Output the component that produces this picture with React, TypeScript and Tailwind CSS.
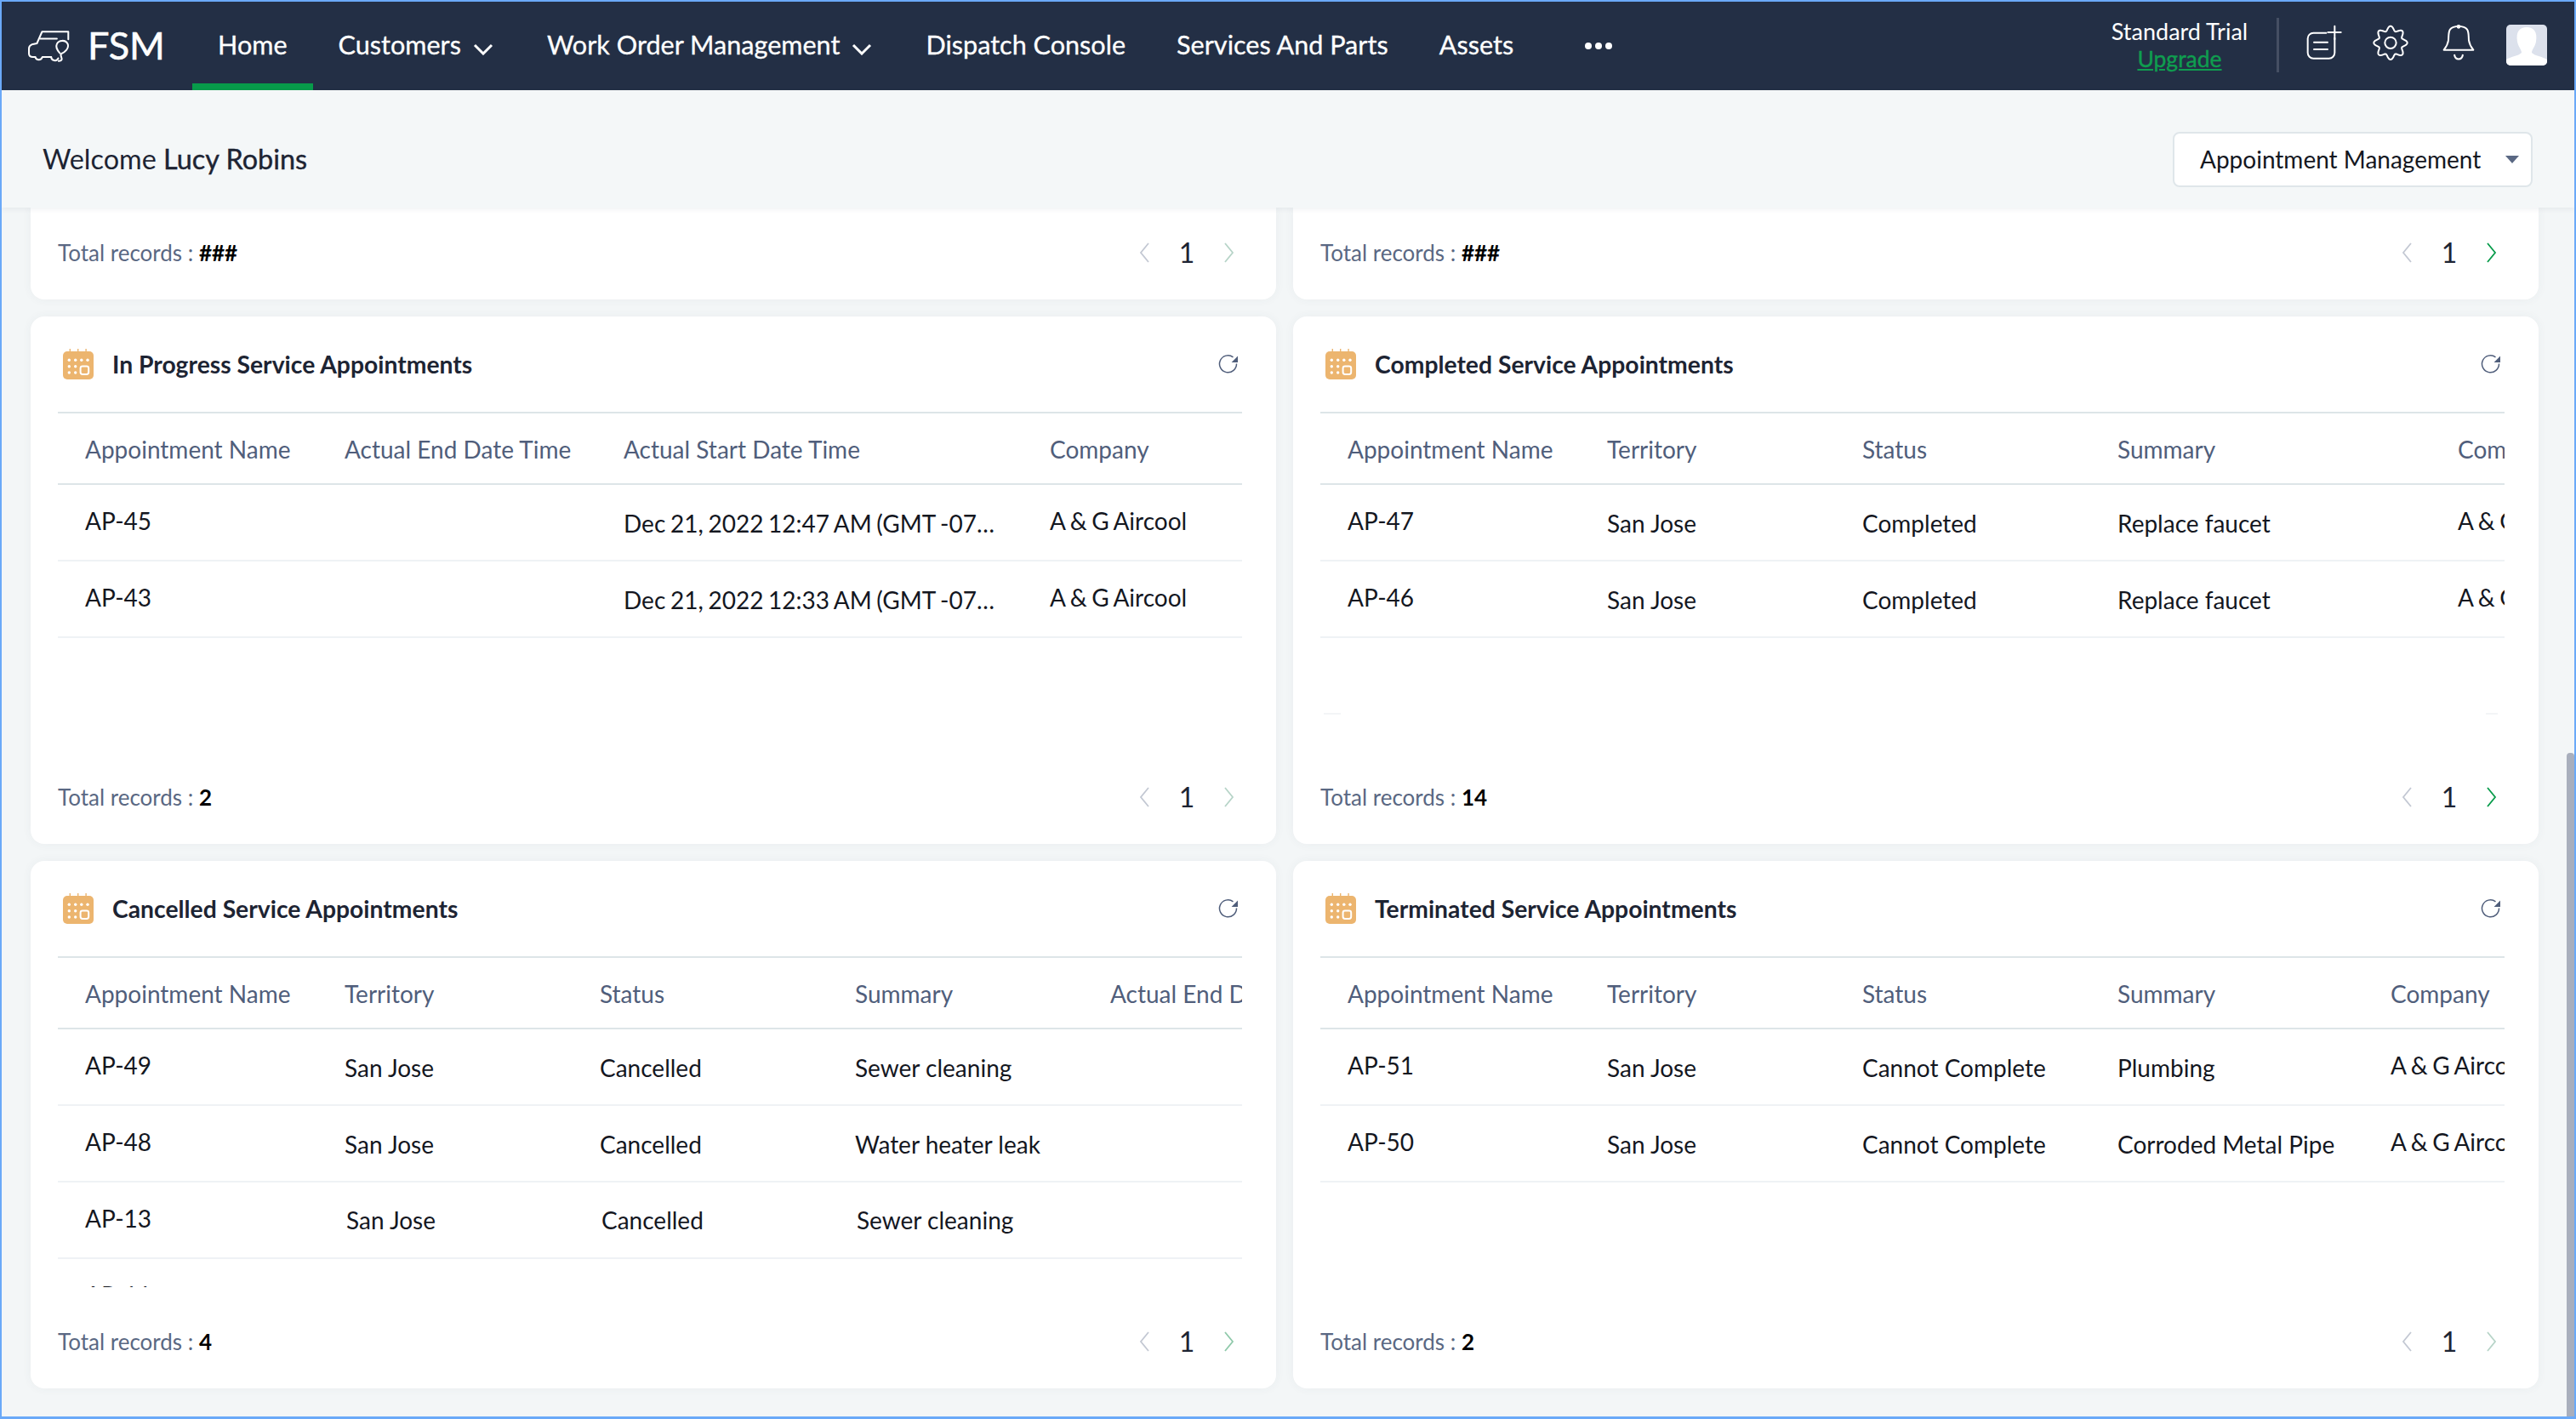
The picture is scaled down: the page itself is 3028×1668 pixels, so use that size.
import React from "react";

const gearPath = (() => {
  const pts: string[] = [];
  const cx = 360, cy = 97;
  for (let i = 0; i <= 160; i++) {
    const t = (i / 160) * Math.PI * 2;
    const r = 51 + 8 * Math.cos(8 * t);
    pts.push(`${i === 0 ? "M" : "L"}${(cx + r * Math.cos(t)).toFixed(1)} ${(cy + r * Math.sin(t)).toFixed(1)}`);
  }
  return pts.join(" ") + " Z";
})();

function Logo() {
  return (
    <svg width="57" height="44" viewBox="30 30 170 130" fill="none" stroke="#fff" strokeWidth="6" strokeLinejoin="round" strokeLinecap="round" className="shrink-0">
      <path d="M180 72 V45 H88 L70 86 L52 90 Q42 94 42 104 V122 Q42 134 56 134 H64" />
      <path d="M64 134 a13 13 0 0 0 25 0 H120" />
      <path d="M82 70 H140" />
      <path d="M120 134 a13 13 0 0 0 25 4" />
      <path d="M150 120 C136 104 136 96 140 88 C146 74 170 72 178 88 C184 104 166 118 156 122 C146 128 170 146 146 148" />
    </svg>
  );
}

function Calendar() {
  return (
    <svg width="36" height="36" viewBox="0 0 36 36" className="shrink-0">
      <rect x="0" y="3" width="36" height="33" rx="5" fill="#ecb56f" />
      <rect x="7.6" y="0" width="1.4" height="4" fill="#ecb56f" />
      <rect x="17" y="0" width="1.4" height="4" fill="#ecb56f" />
      <rect x="26.4" y="0" width="1.4" height="4" fill="#ecb56f" />
      {[7.3, 14.7, 21.8, 29].map((x) => <circle key={x} cx={x} cy="13.3" r="1.7" fill="#fff" />)}
      {[7.3, 14.7].map((x) => <circle key={x} cx={x} cy="20.7" r="1.7" fill="#fff" />)}
      {[7.3, 14.7].map((x) => <circle key={x} cx={x} cy="28" r="1.7" fill="#fff" />)}
      <rect x="20.6" y="20.4" width="9.6" height="9.6" rx="2.4" fill="none" stroke="#fff" strokeWidth="2" />
    </svg>
  );
}

function Refresh() {
  return (
    <svg width="24" height="24" viewBox="0 0 24 24" fill="none" className="shrink-0">
      <path d="M21.5 11.5 A10 10 0 1 1 17.5 3.8" stroke="#4f5d7a" strokeWidth="1.5" />
      <path d="M23 2.4 V10 H15.6 Z" fill="#4f5d7a" />
    </svg>
  );
}

function Chevron({ dir, color }: { dir: "l" | "r"; color: string }) {
  return (
    <svg width="14" height="26" viewBox="0 0 14 26" fill="none" stroke={color} strokeWidth="1.8">
      <path d={dir === "l" ? "M12 2 L3 13 L12 24" : "M2 2 L11 13 L2 24"} />
    </svg>
  );
}

function Pager({ next }: { next: string }) {
  return (
    <div className="flex items-center">
      <Chevron dir="l" color="#c3c8d3" />
      <span className="w-[86px] text-center text-[32px] text-[#1d2433]">1</span>
      <Chevron dir="r" color={next} />
    </div>
  );
}

function Footer({ total, next }: { total: string; next: string }) {
  return (
    <div className="mt-auto h-[110px] shrink-0 flex items-center justify-between pl-8 pr-[48px]">
      <div className="text-[26px] text-[#5a6883]">
        Total records : <span className="font-bold text-black">{total}</span>
      </div>
      <Pager next={next} />
    </div>
  );
}

type Cell = { t: string; up?: boolean; tight?: boolean };
type CardProps = {
  title: string;
  cols: string;
  heads: string[];
  rows: { cells: Cell[]; nudge?: boolean }[];
  total: string;
  next: string;
  ghostLine?: boolean;
};

function Card({ title, cols, heads, rows, total, next, ghostLine }: CardProps) {
  return (
    <section className="h-[620px] bg-white rounded-[16px] shadow-[0_0_12px_rgba(60,80,100,0.05)] flex flex-col">
      <header className="h-[112px] shrink-0 flex items-center pl-[38px] pr-[44px]">
        <Calendar />
        <h2 className="ml-[22px] text-[28.3px] leading-none font-bold text-[#1d2433]">{title}</h2>
        <div className="ml-auto"><Refresh /></div>
      </header>
      <div className="ml-8 mr-10 h-[389px] overflow-hidden">
        <div className={`grid ${cols} h-[86px] border-y-2 border-[#dde5e8] items-center text-[28px] text-[#505e7b] whitespace-nowrap`}>
          {heads.map((h) => <div key={h} className="pl-8 pt-[1px] overflow-hidden">{h}</div>)}
        </div>
        {rows.map((r, i) => (
          <div key={i} className={`grid ${cols} h-[90px] border-b-2 border-[#eff2f5] items-center text-[28px] text-[#14171f] whitespace-nowrap`}>
            {r.cells.map((c, j) => (
              <div key={j} className={`${c.up ? "pb-[5px]" : r.nudge ? "" : "pt-[1px]"} ${r.nudge && j > 0 ? "pl-[34px]" : "pl-8"} ${c.tight ? "[word-spacing:-1.5px]" : ""}`}>{c.t}</div>
            ))}
          </div>
        ))}
        {ghostLine && (
          <div className="mt-[88px] h-[2px] flex justify-between">
            <div className="w-5 ml-1 bg-[#f3f5f7]" />
            <div className="w-[14px] mr-[8px] bg-[#f3f5f7]" />
          </div>
        )}
      </div>
      <Footer total={total} next={next} />
    </section>
  );
}

const NavItem = ({ children, chevron, active }: { children: string; chevron?: boolean; active?: boolean }) => (
  <div className={`relative h-full flex items-center pl-[30px] ${chevron ? "pr-[33px]" : "pr-[30px]"} whitespace-nowrap`}>
    <span className="pb-[2px]">{children}</span>
    {chevron && (
      <svg width="24" height="14" viewBox="0 0 24 14" fill="none" stroke="#fff" strokeWidth="3" className="ml-[14px] mt-[7px]">
        <path d="M2 2 L12 12 L22 2" />
      </svg>
    )}
    {active && <div className="absolute left-0 right-0 bottom-0 h-2 bg-[#079b4a]" />}
  </div>
);

const up = (t: string): Cell => ({ t, up: true });
const co = (t: string): Cell => ({ t, up: true, tight: true });
const c = (t: string): Cell => ({ t });
const d = (t: string): Cell => ({ t, tight: true });
const D1 = "Dec 21, 2022 12:47 AM (GMT -07…";
const D2 = "Dec 21, 2022 12:33 AM (GMT -07…";

export default function App() {
  return (
    <div className="w-[3028px] h-[1668px] overflow-hidden flex flex-col border-x-2 border-t-2 border-b-[3px] border-[#6aa9f8] bg-[#f3f6f7] font-['Lato','Noto_Sans',sans-serif]">
      <nav className="h-[104px] shrink-0 bg-[#232f45] flex items-stretch text-white text-[30.6px] [-webkit-text-stroke:0.3px_white]">
        <div className="flex items-center w-[224px] shrink-0 pl-[28px]">
          <Logo />
          <span className="ml-[16px] text-[45px] leading-none pb-[2px] [-webkit-text-stroke:0.6px_white]">FSM</span>
        </div>
        <NavItem active>Home</NavItem>
        <NavItem chevron>Customers</NavItem>
        <NavItem chevron>Work Order Management</NavItem>
        <NavItem>Dispatch Console</NavItem>
        <NavItem>Services And Parts</NavItem>
        <NavItem>Assets</NavItem>
        <div className="flex items-center gap-[4px] pl-[54px]">
          <span className="w-[8px] h-[8px] rounded-full bg-white" />
          <span className="w-[8px] h-[8px] rounded-full bg-white" />
          <span className="w-[8px] h-[8px] rounded-full bg-white" />
        </div>
        <div className="ml-auto flex items-center pr-[32px]">
          <div className="w-[180px] flex flex-col items-center text-[27px] leading-[32px] mr-[24px] pb-[2px] [-webkit-text-stroke:0px]">
            <span>Standard Trial</span>
            <span className="text-[26.5px] text-[#0f9d4f] underline [-webkit-text-stroke:0.4px_#0f9d4f]">Upgrade</span>
          </div>
          <div className="w-[3px] h-[64px] bg-[#454f63] mr-[30px] mb-[2px]" />
          <svg width="46" height="70" viewBox="59 0 138 210" fill="none" stroke="#fff" strokeWidth="6" strokeLinecap="round" className="mb-[2px]">
            <path d="M135 62 H90 a20 20 0 0 0 -20 20 V132 a20 20 0 0 0 20 20 H145 a20 20 0 0 0 20 -20 V80" />
            <path d="M92 95 H140 M92 120 H140" />
            <path d="M165 38 V85 M141 60 H187" />
          </svg>
          <svg width="46" height="70" viewBox="291 0 138 210" fill="none" stroke="#fff" strokeWidth="6" className="ml-[32px] mb-[2px]">
            <path d={gearPath} strokeLinejoin="round" />
            <circle cx="360" cy="97" r="20" />
          </svg>
          <svg width="46" height="70" viewBox="531 0 138 210" fill="none" stroke="#fff" strokeWidth="6" strokeLinejoin="round" className="ml-[34px] mb-[2px]">
            <path d="M598 38 C640 40 634 60 636 88 C638 102 644 112 652 122 H548 C556 112 562 102 564 88 C566 60 560 40 602 38" />
            <circle cx="600" cy="40" r="4" />
            <path d="M585 138 C588 160 612 160 615 138" strokeWidth="6" />
          </svg>
          <svg width="48" height="48" viewBox="0 0 48 48" className="ml-[33px] mb-[2px]">
            <rect width="48" height="48" rx="5" fill="#dce1ec" />
            <path d="M0 43 V41 C6 37 14 37 18 33 C18 29 14 26 13 20 C11 8 16 3 24 3 C32 3 37 8 35 20 C34 26 30 29 30 33 C34 37 42 37 48 41 V43 A5 5 0 0 1 43 48 H5 A5 5 0 0 1 0 43 Z" fill="#fff" />
          </svg>
        </div>
      </nav>

      <div className="relative z-10 h-[138px] shrink-0 bg-[#f4f7f8] shadow-[0_2px_6px_rgba(60,80,100,0.08)] flex items-center justify-between pl-[48px] pr-[49px] pt-[24px]">
        <div className="text-[32.4px] text-[#1d2433]">
          Welcome <span className="[-webkit-text-stroke:0.4px_#1d2433]">Lucy Robins</span>
        </div>
        <div className="w-[423px] h-[65px] bg-white border-2 border-[#dfe6ea] rounded-[8px] flex items-center pl-[30px] text-[28px] text-[#14171f] whitespace-nowrap">
          Appointment Management
          <span className="ml-auto mr-[14px] w-0 h-0 border-x-[8px] border-x-transparent border-t-[9px] border-t-[#5a6883]" />
        </div>
      </div>

      <main className="relative flex-1 overflow-hidden pl-[34px] grid grid-cols-[1464px_1464px] auto-rows-min gap-5">
        <section className="h-[108px] bg-white rounded-b-[16px] shadow-[0_0_12px_rgba(60,80,100,0.05)] flex flex-col justify-end">
          <Footer total="###" next="#b7d4c8" />
        </section>
        <section className="h-[108px] bg-white rounded-b-[16px] shadow-[0_0_12px_rgba(60,80,100,0.05)] flex flex-col justify-end">
          <Footer total="###" next="#079b4a" />
        </section>

        <Card
          title="In Progress Service Appointments"
          cols="grid-cols-[305px_328px_501px_300px]"
          heads={["Appointment Name", "Actual End Date Time", "Actual Start Date Time", "Company"]}
          rows={[
            { cells: [up("AP-45"), c(""), d(D1), co("A & G Aircool")] },
            { cells: [up("AP-43"), c(""), d(D2), co("A & G Aircool")] },
          ]}
          total="2"
          next="#b7d4c8"
        />
        <Card
          title="Completed Service Appointments"
          cols="grid-cols-[305px_300px_300px_400px_300px]"
          heads={["Appointment Name", "Territory", "Status", "Summary", "Company"]}
          rows={[
            { cells: [up("AP-47"), c("San Jose"), c("Completed"), c("Replace faucet"), co("A & G Aircool")] },
            { cells: [up("AP-46"), c("San Jose"), c("Completed"), c("Replace faucet"), co("A & G Aircool")] },
          ]}
          total="14"
          next="#079b4a"
          ghostLine
        />
        <Card
          title="Cancelled Service Appointments"
          cols="grid-cols-[305px_300px_300px_300px_400px]"
          heads={["Appointment Name", "Territory", "Status", "Summary", "Actual End Date Time"]}
          rows={[
            { cells: [up("AP-49"), c("San Jose"), c("Cancelled"), c("Sewer cleaning"), c("")] },
            { cells: [up("AP-48"), c("San Jose"), c("Cancelled"), c("Water heater leak"), c("")] },
            { cells: [up("AP-13"), c("San Jose"), c("Cancelled"), c("Sewer cleaning"), c("")], nudge: true },
            { cells: [up("AP-11"), c("San Jose"), c("Cancelled"), c("Sewer cleaning"), c("")] },
          ]}
          total="4"
          next="#8fc9aa"
        />
        <Card
          title="Terminated Service Appointments"
          cols="grid-cols-[305px_300px_300px_321px_300px]"
          heads={["Appointment Name", "Territory", "Status", "Summary", "Company"]}
          rows={[
            { cells: [up("AP-51"), c("San Jose"), c("Cannot Complete"), c("Plumbing"), co("A & G Aircool")] },
            { cells: [up("AP-50"), c("San Jose"), c("Cannot Complete"), c("Corroded Metal Pipe"), co("A & G Aircool")] },
          ]}
          total="2"
          next="#b7d4c8"
        />
        <div className="absolute right-0 top-[641px] bottom-0 w-[9px] bg-[#a9afbd] rounded-t-[4px]" />
      </main>
    </div>
  );
}
